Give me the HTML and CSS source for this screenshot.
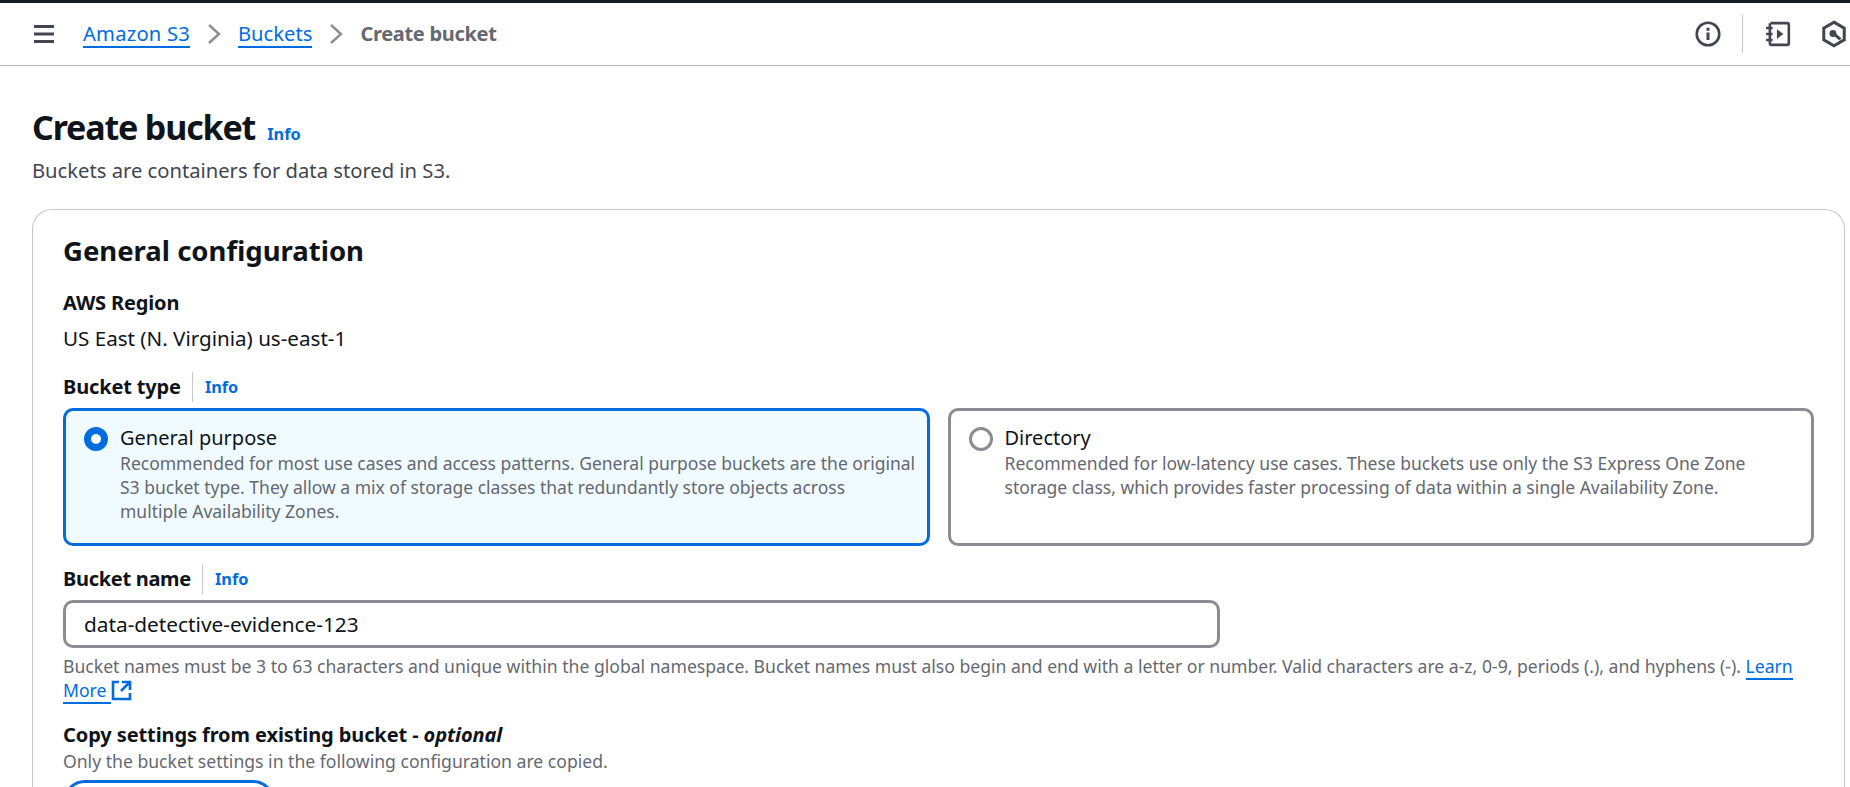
FILE: index.html
```html
<!DOCTYPE html>
<html lang="en">
<head>
<meta charset="utf-8">
<title>Create bucket</title>
<link rel="stylesheet" href="styles.css">
</head>
<body>
<header class="topbar">
  <div class="crumbs">
    <svg class="menu" width="24" height="24" viewBox="0 0 24 24"><path d="M2 4.500h20M2 12h20M2 19.500h20" stroke="#424650" stroke-width="3" fill="none"/></svg>
    <a class="crumb crumb-root" href="#">Amazon S3</a>
    <svg class="chev" width="16" height="24" viewBox="0 0 16 24"><path d="M2 3l10 9-10 9" stroke="#8c8c94" stroke-width="2.400" fill="none"/></svg>
    <a class="crumb" href="#">Buckets</a>
    <svg class="chev" width="16" height="24" viewBox="0 0 16 24"><path d="M2 3l10 9-10 9" stroke="#8c8c94" stroke-width="2.400" fill="none"/></svg>
    <span class="crumb-current">Create bucket</span>
  </div>
  <div class="tools">
    <svg width="26" height="26" viewBox="0 0 24 24"><circle cx="12" cy="12" r="10.400" stroke="#424650" stroke-width="2.400" fill="none"/><path d="M12 10.500v7M12 6.300v2.600" stroke="#424650" stroke-width="2.800" fill="none"/></svg>
    <span class="tool-sep"></span>
    <svg width="26" height="26" viewBox="0 0 24 24"><path d="M5 2h15.500a1.500 1.500 0 0 1 1.500 1.500v17a1.500 1.500 0 0 1-1.500 1.500H6a1.500 1.500 0 0 1-1.500-1.500V2" stroke="#424650" stroke-width="2.400" fill="none"/><path d="M1 6.500h6M1 12h6M1 17.500h6" stroke="#424650" stroke-width="2.400" fill="none"/><path d="M11 7.500l6 4.500-6 4.500z" fill="#424650"/></svg>
    <svg class="tool-last" width="26" height="28" viewBox="0 0 24 26"><path d="M12 2l9.500 5.500v11L12 24l-9.500-5.500v-11z" stroke="#424650" stroke-width="2.800" fill="none"/><circle cx="11" cy="12.500" r="3.200" fill="#424650"/><path d="M12 13l6 5" stroke="#424650" stroke-width="2.800"/></svg>
  </div>
</header>
<main class="page">
  <div class="title-row">
    <h1>Create bucket</h1>
    <a class="info" href="#">Info</a>
  </div>
  <p class="subtitle">Buckets are containers for data stored in S3.</p>
  <section class="card">
    <h2>General configuration</h2>
    <div class="label">AWS Region</div>
    <div class="value">US East (N. Virginia) us-east-1</div>
    <div class="label-row type-label">
      <span class="label">Bucket type</span><a class="info" href="#">Info</a>
    </div>
    <div class="tiles">
      <div class="tile selected">
        <span class="radio on"></span>
        <div>
          <div class="tile-title">General purpose</div>
          <div class="tile-desc">Recommended for most use cases and access patterns. General purpose buckets are the original S3 bucket type. They allow a mix of storage classes that redundantly store objects across multiple Availability Zones.</div>
        </div>
      </div>
      <div class="tile">
        <span class="radio"></span>
        <div>
          <div class="tile-title">Directory</div>
          <div class="tile-desc">Recommended for low-latency use cases. These buckets use only the S3 Express One Zone storage class, which provides faster processing of data within a single Availability Zone.</div>
        </div>
      </div>
    </div>
    <div class="label-row name-label">
      <span class="label">Bucket name</span><a class="info" href="#">Info</a>
    </div>
    <div class="input">data-detective-evidence-123</div>
    <p class="hint">Bucket names must be 3 to 63 characters and unique within the global namespace. Bucket names must also begin and end with a letter or number. Valid characters are a-z, 0-9, periods (.), and hyphens (-). <a href="#" class="learn">Learn More </a><svg class="ext" width="21" height="21" viewBox="0 0 21 21"><path d="M8 2H2v17h17v-6" stroke="#006ce0" stroke-width="2.600" fill="none"/><path d="M11 2h8v8M19 2l-9 9" stroke="#006ce0" stroke-width="2.600" fill="none"/></svg></p>
    <div class="label copy-label">Copy settings from existing bucket - <em>optional</em></div>
    <p class="copy-desc">Only the bucket settings in the following configuration are copied.</p>
    <div class="choose-btn"></div>
  </section>
</main>
</body>
</html>
```
FILE: styles.css
```css
html, body { margin: 0; padding: 0; height: 100%; overflow: hidden; background: #fff; }
body { font-family: "Noto Sans", "Open Sans", sans-serif; color: #0f141a; font-size: 17.6px; line-height: 24px; }
a { color: #006ce0; }
.topbar { height: 62px; border-top: 3px solid #161d26; border-bottom: 1px solid #b4b4bb; display: flex; justify-content: space-between; align-items: center; padding: 0 0 0 32px; overflow: hidden; }
.crumbs { display: flex; align-items: center; font-size: 20.200px; }
.menu { margin-right: 27px; }
.crumb { text-decoration: none; border-bottom: 2px solid #006ce0; line-height: 25px; }
.crumb-root { letter-spacing: 0.2px; }
.chev { margin: 0 15px 0 17px; }
.crumb-current { color: #656871; font-weight: 700; font-size: 20px; letter-spacing: -0.3px; }
.tools { display: flex; align-items: center; flex: none; width: 155px; }
.tools svg { flex: none; }
.tool-sep { width: 1px; height: 38px; background: #c6c6cd; margin: 0 22px 0 21px; flex: none; }
.tool-last { margin-left: 30px; }
.page { padding: 0 5px 0 32px; }
.title-row { display: flex; align-items: baseline; margin-top: 39px; }
h1 { margin: 0; font-size: 34px; line-height: 44px; font-weight: 700; letter-spacing: -1.15px; }
.title-row .info { margin-left: 12px; }
.info { font-size: 16.300px; font-weight: 700; text-decoration: none; }
.subtitle { margin: 7px 0 0; color: #424650; font-size: 20.200px; line-height: 28px; }
.card { margin-top: 25px; border: 1px solid #c6c6cd; border-bottom: 0; border-radius: 20px 20px 0 0; padding: 21px 30px 0; }
h2 { margin: 0; font-size: 27.500px; line-height: 40px; font-weight: 700; }
.label { font-size: 20px; font-weight: 700; line-height: 28px; letter-spacing: -0.15px; }
h2 + .label { margin-top: 18px; }
.value { font-size: 20.600px; line-height: 28px; margin-top: 7px; }
.label-row { display: flex; align-items: center; }
.label-row .info { border-left: 1px solid #c6c6cd; padding-left: 12px; margin-left: 11px; line-height: 30px; }
.type-label { margin-top: 20px; height: 30px; }
.tiles { display: flex; gap: 18px; margin-top: 6px; }
.tile { flex: 1; box-sizing: border-box; height: 138px; border: 3px solid #8c8c94; border-radius: 10px; padding: 13px 11px 12px 18px; display: flex; gap: 12px; }
.tile.selected { border-color: #006ce0; background: #f0fbff; }
.radio { flex: none; width: 24px; height: 24px; box-sizing: border-box; border: 3px solid #8c8c94; border-radius: 50%; margin-top: 3px; background: #fff; }
.radio.on { border: 7px solid #006ce0; }
.tile-title { font-size: 20px; line-height: 27px; }
.tile-desc { color: #656871; line-height: 24px; font-size: 17.500px; }
.name-label { margin-top: 18px; height: 30px; }
.name-label .label { letter-spacing: -0.3px; }
.input { width: 1157px; box-sizing: border-box; height: 48px; border: 3px solid #8c8c94; border-radius: 10px; margin-top: 6px; padding: 0 18px; font-size: 20.800px; line-height: 42px; }
.hint { margin: 6px 0 0; color: #656871; line-height: 24px; }
.learn { text-decoration: none; border-bottom: 2px solid #006ce0; }
.ext { vertical-align: -4px; }
.copy-label { margin-top: 19px; letter-spacing: -0.1px; }
.copy-desc { margin: 0; color: #656871; line-height: 24px; }
.choose-btn { margin: 7px 0 0; width: 206px; height: 40px; border: 3px solid #006ce0; border-radius: 22px; }
```
